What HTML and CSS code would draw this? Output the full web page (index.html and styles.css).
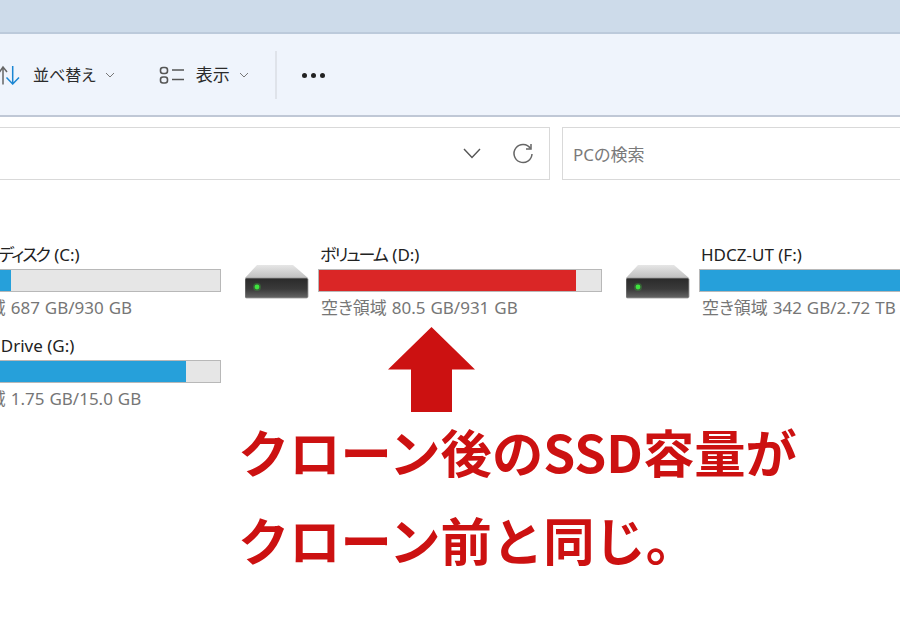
FILE: index.html
```html
<!DOCTYPE html>
<html lang="ja">
<head>
    <meta charset="UTF-8">
    <title>PC</title>
    <link rel="stylesheet" href="styles.css">
</head>
<body>
    <div class="titlebar"></div>

    <div class="toolbar">
        <svg class="icon-sort" width="21" height="20" viewBox="0 0 21 20" fill="none" stroke-width="1.5">
            <path d="M4 19.5V2M0.500 7 4 2 8 7" stroke="#666"/>
            <path d="M13.700 1V19M7.500 12.500 13.700 19 20 12.500" stroke="#1b86d3"/>
        </svg>
        <span class="tool-label label-sort">並べ替え</span>
        <svg class="chevron" width="10" height="6" viewBox="0 0 10 6" fill="none" stroke="#777"><path d="M1 1 5 5 9 1"/></svg>
        <svg class="icon-view" width="26" height="18" viewBox="0 0 26 18" fill="none" stroke="#555" stroke-width="1.6">
            <rect x="1.5" y="1.500" width="7" height="6" rx="2.5"/>
            <rect x="1.5" y="11" width="7" height="6" rx="2.5"/>
            <path d="M13 4H25M13 13.500H25"/>
        </svg>
        <span class="tool-label label-view">表示</span>
        <svg class="chevron" width="10" height="6" viewBox="0 0 10 6" fill="none" stroke="#777"><path d="M1 1 5 5 9 1"/></svg>
        <div class="separator"></div>
        <div class="dots"><i></i><i></i><i></i></div>
    </div>

    <div class="address-row">
        <div class="address-box">
            <svg class="icon-down" width="18" height="11" viewBox="0 0 18 11" fill="none" stroke="#555" stroke-width="1.4"><path d="M1 1 9 9.500 17 1"/></svg>
            <svg class="icon-refresh" width="22" height="22" viewBox="0 0 22 22" fill="none" stroke="#666" stroke-width="1.5">
                <path d="M18.500 5.500A9 9 0 1 0 20 11"/>
                <path d="M19 1V6H14"/>
            </svg>
        </div>
        <div class="search-box">PCの検索</div>
    </div>

    <div class="drives">
        <div class="drive">
            <svg class="disk" width="64" height="34" viewBox="0 0 64 34">
                <use href="#disk-shape"/>
            </svg>
            <div class="drive-info">
                <div class="drive-name"><span class="kana">ローカル ディスク</span> (C:)</div>
                <div class="bar"><div class="bar-fill" style="width: 26%"></div></div>
                <div class="drive-free">空き領域 687 GB/930 GB</div>
            </div>
        </div>
        <div class="drive">
            <svg class="disk" width="64" height="34" viewBox="0 0 64 34">
                <defs>
                    <linearGradient id="disk-top" x1="0" y1="0" x2="0" y2="1">
                        <stop offset="0" stop-color="#e6e6e6"/>
                        <stop offset="1" stop-color="#bfbfbf"/>
                    </linearGradient>
                    <linearGradient id="disk-front" x1="0" y1="0" x2="0" y2="1">
                        <stop offset="0" stop-color="#2a2a2a"/>
                        <stop offset="0.55" stop-color="#3a3a3a"/>
                        <stop offset="1" stop-color="#666"/>
                    </linearGradient>
                    <g id="disk-shape">
                        <path d="M12 0H48L63 13H0Z" fill="url(#disk-top)"/>
                        <rect x="0" y="13" width="63" height="20" rx="1.500" fill="url(#disk-front)" stroke="#9a9a9a" stroke-width="0.8"/>
                        <circle cx="12" cy="22" r="4" fill="#3ddc3d" opacity="0.25"/>
                        <circle cx="12" cy="22" r="2.400" fill="#3fe43f"/>
                    </g>
                </defs>
                <use href="#disk-shape"/>
            </svg>
            <div class="drive-info">
                <div class="drive-name"><span class="kana">ボリューム</span> (D:)</div>
                <div class="bar"><div class="bar-fill bar-full" style="width: 91.2%"></div></div>
                <div class="drive-free">空き領域 80.5 GB/931 GB</div>
            </div>
        </div>
        <div class="drive">
            <svg class="disk" width="64" height="34" viewBox="0 0 64 34">
                <use href="#disk-shape"/>
            </svg>
            <div class="drive-info">
                <div class="drive-name">HDCZ-UT (F:)</div>
                <div class="bar"><div class="bar-fill" style="width: 87.4%"></div></div>
                <div class="drive-free">空き領域 342 GB/2.72 TB</div>
            </div>
        </div>
        <div class="drive drive-short">
            <div class="disk-gap"></div>
            <div class="drive-info">
                <div class="drive-name">Google Drive (G:)</div>
                <div class="bar"><div class="bar-fill" style="width: 88%"></div></div>
                <div class="drive-free">空き領域 1.75 GB/15.0 GB</div>
            </div>
        </div>
    </div>

    <svg class="arrow" width="87" height="85" viewBox="0 0 87 85">
        <path d="M43.500 0 87 42.500H64V85H23V42.500H0Z" fill="#cc1111"/>
    </svg>

    <div class="note">
        <p>クローン後のSSD容量が</p>
        <p>クローン前と同じ。</p>
    </div>
</body>
</html>
```

FILE: styles.css
```css
body {
    margin: 0;
    width: 900px;
    height: 640px;
    overflow: hidden;
    background: #fff;
    font-family: "Noto Sans", "Noto Sans CJK JP", sans-serif;
    font-size: 17px;
    font-feature-settings: "palt";
    color: #222;
}
.titlebar {
    height: 32px;
    background: #cddbea;
    border-bottom: 2px solid #bccadb;
}
.toolbar {
    height: 80px;
    padding-top: 1px;
    background: #eff4fc;
    border-bottom: 2px solid #c0c8d6;
    display: flex;
    align-items: center;
}
.icon-sort {
    margin-left: -1px;
    flex: none;
}
.tool-label {
    line-height: 24px;
    color: #2b2b2b;
    white-space: nowrap;
}
.label-sort {
    margin-left: 13px;
    font-size: 16px;
}
.label-view {
    margin-left: 11px;
}
.chevron {
    margin-left: 9px;
    flex: none;
}
.icon-view {
    margin-left: 44px;
    flex: none;
}
.separator {
    width: 2px;
    height: 48px;
    margin-left: 26px;
    background: #dfe3ea;
}
.dots {
    display: flex;
    gap: 4px;
    margin-left: 25px;
}
.dots i {
    width: 5px;
    height: 5px;
    border-radius: 50%;
    background: #222;
}
.address-row {
    display: flex;
    gap: 12px;
    padding-top: 10px;
    margin-left: -10px;
}
.address-box {
    width: 558px;
    height: 51px;
    border: 1px solid #d9d9d9;
    display: flex;
    align-items: center;
    justify-content: flex-end;
}
.icon-down {
    margin-right: 31px;
}
.icon-refresh {
    margin-right: 15px;
}
.search-box {
    flex: 1;
    height: 51px;
    margin-right: -10px;
    padding-left: 10px;
    border: 1px solid #d9d9d9;
    line-height: 53px;
    color: #7a7a7a;
}
.drives {
    display: grid;
    grid-template-columns: repeat(3, 381px);
    grid-auto-rows: 91px;
    width: 1143px;
    margin: 65px 0 0 -136px;
}
.drive {
    display: flex;
}
.disk {
    margin-top: 20px;
    flex: none;
}
.disk-gap {
    width: 64px;
    flex: none;
}
.drive-info {
    width: 284px;
    margin-left: 9px;
}
.drive-name {
    height: 24px;
    line-height: 20px;
    padding-left: 2px;
    color: #222;
    white-space: nowrap;
}
.kana {
    letter-spacing: -2px;
    margin-right: 1px;
}
.bar {
    height: 21px;
    background: #e6e6e6;
    border: 1px solid #b8b8b8;
}
.bar-fill {
    height: 100%;
    background: #26a0da;
}
.bar-full {
    background: #da2626;
}
.drive-free {
    margin-top: 6px;
    line-height: 20px;
    padding-left: 3px;
    word-spacing: 0.5px;
    color: #767676;
    white-space: nowrap;
}
.arrow {
    display: block;
    margin: -100px 0 0 388px;
}
.note {
    margin: -5px 0 0 238px;
    font-family: "Noto Sans CJK JP", sans-serif;
    font-size: 51.3px;
    font-weight: 700;
    font-feature-settings: normal;
    color: #cc1111;
    white-space: nowrap;
}
.note p {
    margin: 0;
    line-height: 88px;
}
```
